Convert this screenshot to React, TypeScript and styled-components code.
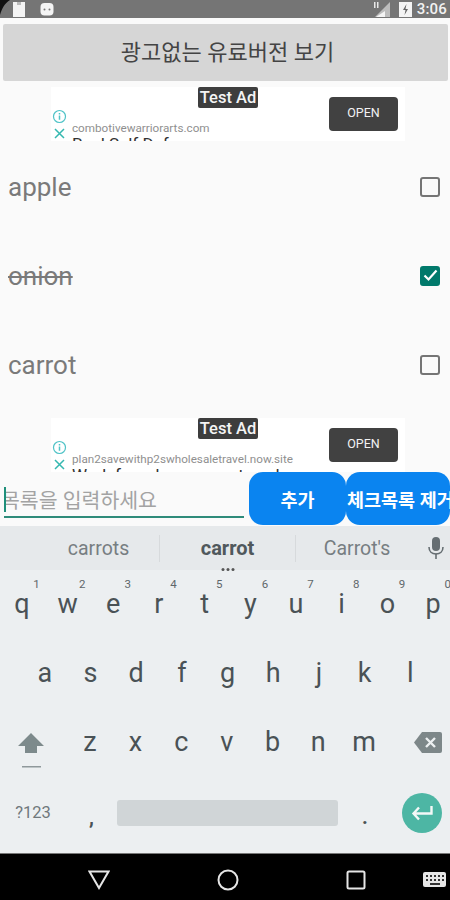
import React from "react";
import styled, { createGlobalStyle } from "styled-components";

const GlobalStyle = createGlobalStyle`
  html, body {
    margin: 0;
    padding: 0;
    background: #fafafa;
  }
  * {
    box-sizing: border-box;
  }
`;

const Screen = styled.div`
  width: 450px;
  height: 900px;
  overflow: hidden;
  position: relative;
  display: flex;
  flex-direction: column;
  font-family: Roboto, "Noto Sans CJK KR", sans-serif;
  background: #fafafa;
`;

const StatusBar = styled.div`
  height: 18px;
  flex: none;
  background: #757575;
  display: flex;
  align-items: center;
  padding: 0 3px 0 12px;
  overflow: hidden;
  position: relative;
  color: #f2f2f2;
`;

const CornerWedge = styled.svg`
  position: absolute;
  left: 0;
  top: 0;
`;

const StatusLeft = styled.div`
  display: flex;
  align-items: center;
  gap: 14px;
  flex: 1;
`;

const StatusRight = styled.div`
  display: flex;
  align-items: center;
`;

const Clock = styled.span`
  font-size: 15px;
  font-weight: 500;
  margin-left: 5px;
  letter-spacing: 0.2px;
`;

const PromoButton = styled.div`
  flex: none;
  height: 57px;
  margin: 6px 2px 6px 3px;
  padding: 0 0 5px 4px;
  background: #d6d6d6;
  border-radius: 2px;
  display: flex;
  align-items: center;
  justify-content: center;
  font-size: 22px;
  color: #444;
`;

const AdBox = styled.div`
  flex: none;
  position: relative;
  width: 354px;
  height: 54px;
  margin-left: 51px;
  background: #fff;
  overflow: hidden;
  display: flex;
  align-items: flex-start;
  padding: 10px 7px 0 0;
`;

const TestBadge = styled.div`
  position: absolute;
  left: 147px;
  top: 0;
  width: 60px;
  height: 21px;
  background: #3d3d3d;
  border-radius: 2px;
  color: #f4f4f4;
  font-size: 16.5px;
  font-weight: 500;
  line-height: 21px;
  text-align: center;
`;

const AdIcons = styled.div`
  width: 17px;
  flex: none;
  padding-top: 12px;
  margin-right: 4px;
  display: flex;
  flex-direction: column;
  align-items: center;
  gap: 4px;
`;

const AdCopy = styled.div`
  flex: 1;
  min-width: 0;
  padding-top: 24px;
  margin-right: 8px;
`;

const AdDomain = styled.div`
  font-size: 11.7px;
  line-height: 14px;
  color: #8f8f8f;
  white-space: nowrap;
`;

const AdHeadline = styled.div`
  font-size: 17px;
  line-height: 18px;
  color: #333;
  white-space: nowrap;
`;

const OpenButton = styled.div`
  width: 69px;
  height: 34px;
  flex: none;
  background: #414141;
  border-radius: 4px;
  color: #f2f2f2;
  font-size: 12.5px;
  display: flex;
  align-items: center;
  justify-content: center;
  padding-bottom: 4px;
`;

const TodoList = styled.div`
  flex: none;
  margin-top: 2px;
  margin-bottom: 8px;
`;

const TodoRow = styled.div`
  height: 89px;
  display: flex;
  align-items: center;
  justify-content: space-between;
  padding: 0 10px 2px 8px;
`;

const TodoLabel = styled.span<{ $done?: boolean }>`
  font-size: 26px;
  color: #7a7a7a;
  text-decoration: ${(p) => (p.$done ? "line-through" : "none")};
`;

const CheckBox = styled.div<{ $checked?: boolean }>`
  width: 20px;
  height: 20px;
  border-radius: 3px;
  border: 2px solid ${(p) => (p.$checked ? "#00796b" : "#757575")};
  background: ${(p) => (p.$checked ? "#00796b" : "transparent")};
  display: flex;
  align-items: center;
  justify-content: center;
`;

const InputRow = styled.div`
  height: 54px;
  flex: none;
  display: flex;
  background: #fafafa;
`;

const InputField = styled.div`
  width: 240px;
  flex: none;
  margin: 0 5px 0 4px;
  height: 46px;
  border-bottom: 2px solid #2e8b7a;
  overflow: hidden;
  position: relative;
  display: flex;
  align-items: center;
  padding-top: 9px;
`;

const Caret = styled.div`
  position: absolute;
  left: 0;
  top: 15px;
  width: 2px;
  height: 25px;
  background: #1f8f7a;
`;

const Placeholder = styled.span`
  font-size: 20.5px;
  color: #a3a3a3;
  margin-left: -3px;
  white-space: nowrap;
`;

const ActionButton = styled.div<{ $width: number; $wide?: boolean }>`
  width: ${(p) => p.$width}px;
  flex: none;
  height: 53px;
  background: #0a84f0;
  border-radius: 14px;
  color: #fff;
  font-size: 18.5px;
  font-weight: 700;
  display: flex;
  align-items: center;
  justify-content: ${(p) => (p.$wide ? "flex-start" : "center")};
  padding-left: ${(p) => (p.$wide ? "1px" : "0")};
  white-space: nowrap;
  overflow: hidden;
`;

const Keyboard = styled.div`
  flex: none;
  height: 327px;
  background: #eceff1;
  display: flex;
  flex-direction: column;
  overflow: hidden;
`;

const SuggestionStrip = styled.div`
  height: 44px;
  flex: none;
  background: #e6e9eb;
  display: grid;
  grid-template-columns: 160px 136px 120px 34px;
  align-items: center;
`;

const Suggestion = styled.div<{ $main?: boolean; $divider?: boolean; $leading?: number }>`
  position: relative;
  height: 27px;
  display: flex;
  align-items: center;
  justify-content: center;
  font-size: ${(p) => (p.$main ? "20px" : "19.5px")};
  font-weight: ${(p) => (p.$main ? 700 : 400)};
  color: ${(p) => (p.$main ? "#50585c" : "#777e82")};
  border-right: ${(p) => (p.$divider ? "1px solid #d7dadc" : "none")};
  padding-left: ${(p) => p.$leading ?? 0}px;
`;

const MoreDots = styled.div`
  position: absolute;
  left: 50%;
  bottom: -9px;
  transform: translateX(-50%);
  display: flex;
  gap: 2px;
`;

const Dot = styled.i`
  display: block;
  width: 3px;
  height: 3px;
  border-radius: 50%;
  background: #555;
`;

const MicSlot = styled.div`
  display: flex;
  justify-content: center;
  padding-left: 6px;
`;

const KeyRow = styled.div<{ $inset?: number }>`
  height: 69px;
  flex: none;
  display: flex;
  margin-left: ${(p) => p.$inset ?? 0}px;
`;

const Key = styled.div`
  width: 45.7px;
  flex: none;
  position: relative;
  display: flex;
  align-items: center;
  justify-content: center;
  font-size: 27px;
  padding-bottom: 1px;
  color: #4a5256;
`;

const KeyHint = styled.span`
  position: absolute;
  top: 7px;
  right: 5px;
  font-size: 11.5px;
  color: #5f676b;
`;

const SideKey = styled.div`
  width: 67px;
  flex: none;
  display: flex;
  align-items: center;
  justify-content: center;
`;

const BottomRow = styled.div`
  flex: 1;
  display: flex;
  align-items: center;
  padding-bottom: 5px;
`;

const SymbolKey = styled.div`
  width: 66px;
  flex: none;
  text-align: center;
  font-size: 16.5px;
  color: #70787c;
`;

const PunctKey = styled.div<{ $width: number }>`
  width: ${(p) => p.$width}px;
  flex: none;
  text-align: center;
  font-size: 20px;
  font-weight: 700;
  line-height: 26px;
  padding-top: 8px;
  color: #4a5256;
`;

const SpaceBar = styled.div`
  width: 221px;
  height: 26px;
  flex: none;
  background: #d0d5d7;
  border-radius: 3px;
`;

const EnterKey = styled.div`
  width: 40px;
  height: 40px;
  flex: none;
  margin-left: 10px;
  border-radius: 50%;
  background: #4db6a4;
  display: flex;
  align-items: center;
  justify-content: center;
`;

const NavBar = styled.div`
  flex: 1;
  background: #000;
  border-top: 1px solid #777;
  display: flex;
  align-items: center;
  padding: 6px 0 0 35px;
`;

const NavSlot = styled.div`
  width: 128.5px;
  flex: none;
  display: flex;
  justify-content: center;
`;

const NavKeyboard = styled.div`
  flex: none;
  margin-left: 2px;
  display: flex;
`;

const rows = {
  top: ["q", "w", "e", "r", "t", "y", "u", "i", "o", "p"],
  middle: ["a", "s", "d", "f", "g", "h", "j", "k", "l"],
  bottom: ["z", "x", "c", "v", "b", "n", "m"],
};

function InfoIcon() {
  return (
    <svg width="15" height="15" viewBox="0 0 15 15" fill="none" stroke="#4fc3c7" strokeWidth="1.2">
      <circle cx="7.5" cy="7.5" r="6" />
      <path d="M7.5 6.5v4.2M7.5 4v1.4" strokeWidth="1.5" />
    </svg>
  );
}

function CloseIcon() {
  return (
    <svg width="11" height="11" viewBox="0 0 11 11" fill="none" stroke="#35b8b0" strokeWidth="1.5">
      <path d="M1 1l9 9M10 1l-9 9" />
    </svg>
  );
}

function Ad({ domain, headline }: { domain: string; headline: string }) {
  return (
    <AdBox>
      <TestBadge>Test Ad</TestBadge>
      <AdIcons>
        <InfoIcon />
        <CloseIcon />
      </AdIcons>
      <AdCopy>
        <AdDomain>{domain}</AdDomain>
        <AdHeadline>{headline}</AdHeadline>
      </AdCopy>
      <OpenButton>OPEN</OpenButton>
    </AdBox>
  );
}

export default function App() {
  return (
    <Screen>
      <GlobalStyle />
      <StatusBar>
        <CornerWedge width="10" height="15" viewBox="0 0 10 15">
          <path d="M0 0h10C5 3 2 8 0 15z" fill="#111" />
        </CornerWedge>
        <StatusLeft>
          <svg width="14" height="15" viewBox="0 0 14 15" fill="#f4f4f4">
            <path d="M1 0h12v15H1z" />
            <path d="M5 0h4v3H5z" fill="#bbb" />
          </svg>
          <svg width="14" height="13" viewBox="0 0 14 13" fill="#f4f4f4">
            <rect x="0.5" y="0" width="13" height="12.5" rx="4" />
            <circle cx="4.5" cy="6.5" r="1" fill="#777" />
            <circle cx="9.5" cy="6.5" r="1" fill="#777" />
          </svg>
        </StatusLeft>
        <StatusRight>
          <svg width="18" height="15" viewBox="0 0 18 15" style={{ marginRight: 8 }}>
            <path d="M17 0v15H2z" fill="#bdbdbd" />
            <path d="M12 9v6H3z" fill="#f4f4f4" />
            <path d="M1 0h1.5v6H1zM4 0h1.5v6H4z" fill="#e8e8e8" />
          </svg>
          <svg width="13" height="15" viewBox="0 0 13 15">
            <path d="M0 0h13v15H0z" fill="#f4f4f4" />
            <path d="M7.5 2L4 8h2.5l-1 5L9 7H6.5z" fill="#666" />
          </svg>
          <Clock>3:06</Clock>
        </StatusRight>
      </StatusBar>

      <PromoButton>광고없는 유료버전 보기</PromoButton>
      <Ad domain="combotivewarriorarts.com" headline="Real Self Defense" />

      <TodoList>
        <TodoRow>
          <TodoLabel>apple</TodoLabel>
          <CheckBox />
        </TodoRow>
        <TodoRow>
          <TodoLabel $done>onion</TodoLabel>
          <CheckBox $checked>
            <svg width="15" height="13" viewBox="0 0 15 13" fill="none" stroke="#fff" strokeWidth="2.2">
              <path d="M1.5 6.5l4 4 8-9" />
            </svg>
          </CheckBox>
        </TodoRow>
        <TodoRow>
          <TodoLabel>carrot</TodoLabel>
          <CheckBox />
        </TodoRow>
      </TodoList>

      <Ad domain="plan2savewithp2swholesaletravel.now.site" headline="Work from home as a travel pro" />

      <InputRow>
        <InputField>
          <Caret />
          <Placeholder>목록을 입력하세요</Placeholder>
        </InputField>
        <ActionButton $width={97}>추가</ActionButton>
        <ActionButton $width={104} $wide>체크목록 제거</ActionButton>
      </InputRow>

      <Keyboard>
        <SuggestionStrip>
          <Suggestion $divider $leading={38}>carrots</Suggestion>
          <Suggestion $main $divider>
            carrot
            <MoreDots>
              <Dot />
              <Dot />
              <Dot />
            </MoreDots>
          </Suggestion>
          <Suggestion $leading={2}>Carrot's</Suggestion>
          <MicSlot>
            <svg width="18" height="24" viewBox="0 0 18 24" fill="#666e72">
              <rect x="5" y="1" width="8" height="14" rx="4" />
              <path d="M2 11c0 4.5 3 7 7 7s7-2.5 7-7" fill="none" stroke="#666e72" strokeWidth="1.6" />
              <path d="M8.2 17.5h1.6V23H8.2z" />
            </svg>
          </MicSlot>
        </SuggestionStrip>

        <KeyRow $inset={-1}>
          {rows.top.map((k, i) => (
            <Key key={k}>
              {k}
              <KeyHint>{(i + 1) % 10}</KeyHint>
            </Key>
          ))}
        </KeyRow>
        <KeyRow $inset={22}>
          {rows.middle.map((k) => (
            <Key key={k}>{k}</Key>
          ))}
        </KeyRow>
        <KeyRow>
          <SideKey>
            <svg width="28" height="42" viewBox="0 0 28 42" fill="#7d8a8c" style={{ marginTop: 20, marginLeft: -6 }}>
              <path d="M14 1L1 14h7v7h12v-7h7z" />
              <path d="M5 34h19v1.5H5z" fill="#8f989b" />
            </svg>
          </SideKey>
          {rows.bottom.map((k) => (
            <Key key={k}>{k}</Key>
          ))}
          <SideKey>
            <svg width="28" height="21" viewBox="0 0 28 21" style={{ marginLeft: 16 }}>
              <path d="M8 0h18a2 2 0 012 2v17a2 2 0 01-2 2H8L0 10.5z" fill="#7d8789" />
              <path d="M12 6l9 9M21 6l-9 9" stroke="#eceff1" strokeWidth="2.4" fill="none" />
            </svg>
          </SideKey>
        </KeyRow>
        <BottomRow>
          <SymbolKey>?123</SymbolKey>
          <PunctKey $width={51}>,</PunctKey>
          <SpaceBar />
          <PunctKey $width={54}>.</PunctKey>
          <EnterKey>
            <svg width="22" height="16" viewBox="0 0 22 16" fill="none" stroke="#f4f8f7" strokeWidth="2.4">
              <path d="M20.5 1v7.5H3M8 2.5L2.5 8.5 8 14.5" />
            </svg>
          </EnterKey>
        </BottomRow>
      </Keyboard>

      <NavBar>
        <NavSlot>
          <svg width="22" height="20" viewBox="0 0 22 20" fill="none" stroke="#e6e6e6" strokeWidth="2">
            <path d="M1.5 1.5h19L11 18z" />
          </svg>
        </NavSlot>
        <NavSlot>
          <svg width="22" height="22" viewBox="0 0 22 22" fill="none" stroke="#e6e6e6" strokeWidth="2">
            <circle cx="11" cy="11" r="9.5" />
          </svg>
        </NavSlot>
        <NavSlot>
          <svg width="20" height="20" viewBox="0 0 20 20" fill="none" stroke="#e6e6e6" strokeWidth="2">
            <rect x="1.5" y="1.5" width="17" height="17" rx="1.5" />
          </svg>
        </NavSlot>
        <NavKeyboard>
          <svg width="24" height="16" viewBox="0 0 24 16">
            <rect width="23" height="15" rx="2" fill="#e6e6e6" />
            <path d="M3 3h2v2H3zM7 3h2v2H7zM11 3h2v2h-2zM15 3h2v2h-2zM19 3h2v2h-2zM3 7h2v2H3zM7 7h2v2H7zM11 7h2v2h-2zM15 7h2v2h-2zM19 7h2v2h-2zM7 11h10v2H7z" fill="#333" />
          </svg>
        </NavKeyboard>
      </NavBar>
    </Screen>
  );
}
